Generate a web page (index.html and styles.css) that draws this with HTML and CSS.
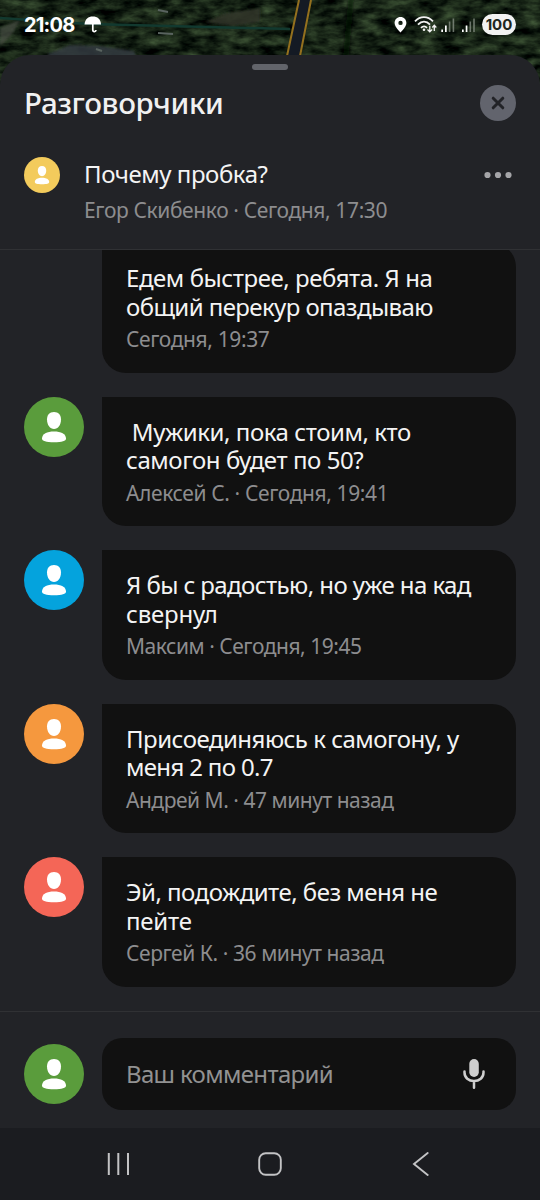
FILE: index.html
```html
<!DOCTYPE html>
<html lang="ru">
<head>
<meta charset="utf-8">
<title>Разговорчики</title>
<link rel="stylesheet" href="styles.css">
</head>
<body>
<svg class="defs" width="0" height="0">
  <symbol id="user" viewBox="0 0 60 60">
    <path d="M30 15c4.600 0 7 3 7 7.500C37 28 34 32 30 32s-7-4-7-9.500C23 18 25.400 15 30 15z"/>
    <path d="M30 34.600c7 0 12 2.600 12 7 0 2.600-4 3.700-12 3.700s-12-1.100-12-3.700c0-4.400 5-7 12-7z"/>
  </symbol>
</svg>
<div class="screen">
  <svg class="map" viewBox="0 0 540 100">
    <defs>
      <filter id="forest" x="0" y="0" width="100%" height="100%" color-interpolation-filters="sRGB">
        <feTurbulence type="fractalNoise" baseFrequency="0.05 0.11" numOctaves="4" seed="8"/>
        <feColorMatrix values="0.40 0 0 0 -0.11  0.50 0 0 0 -0.11  0.33 0 0 0 -0.08  0 0 0 0 1"/>
      </filter>
      <filter id="soft"><feGaussianBlur stdDeviation="1"/></filter>
    </defs>
    <rect width="540" height="100" filter="url(#forest)"/>
    <g filter="url(#soft)">
      <path d="M205 22l22-9 33-5v14l-28 4z" fill="#33382a" opacity=".8"/>
      <path d="M48 54l22-9 30 1 34 5 2 6H48z" fill="#343a40" opacity=".85"/>
      <path d="M0 28l20-8-8 14-12 12z" fill="#474b44" opacity=".7"/>
      <path d="M348 0h6l-5 55h-6z" fill="#060e08" opacity=".6"/>
    </g>
    <path d="M0 18l90 6 200 5" fill="none" stroke="#12392f" stroke-width="2.500"/>
    <path d="M299 0h11l-10 56h-12z" fill="#141a24"/>
    <path d="M299 0l-12 56M311 0l-11 56" fill="none" stroke="#94701e" stroke-width="2"/>
    <path d="M158 10l10 2M158 33l15 1M96 49l6 2" stroke="#59635f" stroke-width="2"/>
  </svg>
  <div class="status">
    <span class="clock">21:08</span>
    <svg class="umbrella" width="18" height="18" viewBox="0 0 18 18"><path d="M0.500 8.500C1 3 4.200 0.500 8.800 0.500S16.800 3 17 8.500z" fill="#fff"/><path d="M8.800 7v6.700c0 2.600 3 2.600 3.200 .3" fill="none" stroke="#fff" stroke-width="1.700"/></svg>
    <span class="grow"></span>
    <svg width="81" height="18" viewBox="0 0 81 18">
      <path d="M6.500 1C3 1 .600 3.600.600 7c0 4 5.900 9.500 5.900 9.500S12.400 11 12.400 7C12.400 3.600 10 1 6.500 1zm0 3.700a2.200 2.200 0 1 1 0 4.400 2.200 2.200 0 0 1 0-4.400z" fill="#fff" fill-rule="evenodd"/>
      <g fill="none" stroke="#f2f2f2" stroke-width="1.800">
        <path d="M21 5.300c5.200-5.500 12.600-5.500 18 0M24 8.700c3.600-4 8.400-4 12 0M27 11.800c2-2 4.200-2 6 0"/>
        <path d="M35.800 9.800v6M33.500 13.500l2.300 2.400 2.300-2.400M40.300 15V9.500M38.300 11.500l2-2.200 2 2.200" stroke-width="1.300"/>
      </g>
      <circle cx="30" cy="13.800" r="1.300" fill="#f2f2f2"/>
      <g fill="#fff"><path d="M47.300 13.500h1.700V16h-1.700zM51 9.500h1.700V16H51zM68 13.500h1.700V16H68zM71.700 9.500h1.700V16h-1.700z"/></g>
      <g fill="#8b948a" opacity=".75"><path d="M54.800 5.500h1.600V16h-1.600zM58.600 2.500h1.600V16h-1.600zM75.500 5.500h1.600V16h-1.600zM79.200 2.500h1.600V16h-1.600z"/></g>
    </svg>
    <span class="battery">100</span>
  </div>
  <main class="sheet">
    <div class="handle"></div>
    <header class="head">
      <h1 class="title">Разговорчики</h1>
      <svg class="close" width="36" height="36" viewBox="0 0 36 36"><circle cx="18" cy="18" r="18" fill="#62646d"/><path d="M13.200 13.200l9.600 9.600M22.800 13.200l-9.600 9.600" stroke="#222327" stroke-width="3" stroke-linecap="round"/></svg>
    </header>
    <section class="topic">
      <svg class="avatar small yellow"><use href="#user"/></svg>
      <div class="topic-body">
        <div class="question">Почему пробка?</div>
        <div class="meta author">Егор Скибенко · Сегодня, 17:30</div>
      </div>
      <svg class="dots" width="28" height="8" viewBox="0 0 28 8" fill="#a5a5a8"><circle cx="3.500" cy="4" r="3.100"/><circle cx="14" cy="4" r="3.100"/><circle cx="24.500" cy="4" r="3.100"/></svg>
    </section>
    <section class="list">
      <article class="comment first">
        <div class="avatar"></div>
        <div class="bubble"><p><span class="t4">Едем быстрее, ребята. Я на</span><br><span class="t6">общий перекур опаздываю</span></p><div class="meta">Сегодня, 19:37</div></div>
      </article>
      <article class="comment">
        <svg class="avatar green"><use href="#user"/></svg>
        <div class="bubble"><p><span class="t4">&nbsp;Мужики, пока стоим, кто</span><br><span class="t4">самогон будет по 50?</span></p><div class="meta">Алексей С. · Сегодня, 19:41</div></div>
      </article>
      <article class="comment">
        <svg class="avatar blue"><use href="#user"/></svg>
        <div class="bubble"><p><span class="t6">Я бы с радостью, но уже на кад</span><br><span class="t2">свернул</span></p><div class="meta t5">Максим · Сегодня, 19:45</div></div>
      </article>
      <article class="comment">
        <svg class="avatar orange"><use href="#user"/></svg>
        <div class="bubble"><p><span class="t5">Присоединяюсь к самогону, у</span><br><span class="t7">меня 2 по 0.7</span></p><div class="meta t5">Андрей М. · 47 минут назад</div></div>
      </article>
      <article class="comment">
        <svg class="avatar red"><use href="#user"/></svg>
        <div class="bubble"><p><span class="t5">Эй, подождите, без меня не</span><br><span class="t2">пейте</span></p><div class="meta t4">Сергей К. · 36 минут назад</div></div>
      </article>
    </section>
    <footer class="compose">
      <svg class="avatar green"><use href="#user"/></svg>
      <div class="input">
        <span class="placeholder t7">Ваш комментарий</span>
        <svg width="24" height="32" viewBox="0 0 24 32"><rect x="7.300" y="1" width="9.500" height="18" rx="4.750" fill="#cfcfcf"/><path d="M2.500 13.500v1c0 5.300 4.200 8.600 9.500 8.600s9.500-3.300 9.500-8.600v-1M12 23v6.800" fill="none" stroke="#cfcfcf" stroke-width="2.500" stroke-linecap="round"/></svg>
      </div>
    </footer>
  </main>
  <nav class="nav">
    <svg width="24" height="24" viewBox="0 0 24 24"><path d="M2.800 1v22M12.300 1v22M22 1v22" stroke="#c3c3c5" stroke-width="2"/></svg>
    <svg width="24" height="24" viewBox="0 0 24 24"><rect x="1.200" y="1.200" width="21.600" height="21.600" rx="6.500" fill="none" stroke="#c3c3c5" stroke-width="1.900"/></svg>
    <svg width="24" height="24" viewBox="0 0 24 24"><path d="M18.700 1L5 12l13.700 11" fill="none" stroke="#c3c3c5" stroke-width="1.900" stroke-linecap="round"/></svg>
  </nav>
</div>
</body>
</html>
```
FILE: styles.css
```css
* { box-sizing: border-box; }
body { margin: 0; background: #1b1c20; font-family: "Noto Sans", sans-serif; }
.defs, .map { position: absolute; top: 0; left: 0; }
.map { width: 540px; height: 100px; }
.screen { position: relative; width: 540px; height: 1200px; display: flex; flex-direction: column; overflow: hidden; }
.status { position: relative; height: 55px; flex: none; display: flex; align-items: flex-start; padding: 14px 24px 0; color: #fff; }
.status svg { margin-top: 2px; }
.clock { font: bold 20px/22px Inter, sans-serif; letter-spacing: -0.8px; width: 60px; }
.grow { flex: 1; }
.battery { width: 34px; height: 21px; margin-left: 7px; border-radius: 11px; background: #f2f2f2; color: #202620; font: bold 15px/21px Inter, sans-serif; text-align: center; }
.sheet { position: relative; height: 1073px; flex: none; background: #222327; border-radius: 30px 30px 0 0; display: flex; flex-direction: column; }
.handle { width: 36px; height: 6px; border-radius: 3px; background: #62646a; margin: 9px auto 0; flex: none; }
.head { height: 36px; margin: 15px 24px 0; display: flex; justify-content: space-between; flex: none; }
.title { margin: -2px 0 0; font-size: 29.5px; line-height: 40px; font-weight: 500; color: #f1f1f1; letter-spacing: -0.35px; }
.topic { height: 129px; padding: 36px 24px 0; display: flex; border-bottom: 1.5px solid #303134; flex: none; }
.topic-body { flex: 1; margin-left: 24px; }
.question { font-size: 24px; line-height: 34px; color: #f4f4f4; letter-spacing: -0.43px; }
.meta { font-size: 21px; line-height: 28px; color: #8d8d8f; white-space: nowrap; letter-spacing: -0.38px; }
.author { margin-top: 5px; }
.dots { margin: 14px 4px 0 0; }
.avatar { width: 60px; height: 60px; border-radius: 50%; fill: #fff; flex: none; }
.small { width: 36px; height: 36px; }
.yellow { background: #f3cb5c; }
.green { background: #5a9c3c; }
.blue { background: #04a3dd; }
.orange { background: #f5983e; }
.red { background: #f46657; }
.list { height: 761px; overflow: hidden; flex: none; display: flex; flex-direction: column; gap: 24px; }
.comment { display: flex; gap: 18px; height: 129.5px; padding: 0 24px; flex: none; }
.first { margin-top: -6.6px; }
.bubble { flex: 1; background: #111; border-radius: 0 24px 24px 24px; padding: 20.9px 0 0 24px; }
.bubble p { margin: 0 0 4px; font-size: 24px; line-height: 28.5px; color: #f4f4f4; white-space: nowrap; }
/* tracking steps */
.t2 { letter-spacing: -0.2px; }
.t4 { letter-spacing: -0.43px; }
.t5 { letter-spacing: -0.51px; }
.t6 { letter-spacing: -0.58px; }
.t7 { letter-spacing: -0.66px; }
.meta.t5 { letter-spacing: -0.47px; }
.compose { flex: 1; border-top: 1.5px solid #303134; display: flex; gap: 18px; align-items: center; padding: 7px 24px 0; }
.input { flex: 1; height: 72px; border-radius: 20px; background: #111; display: flex; align-items: center; justify-content: space-between; padding: 0 30px 0 24px; }
.placeholder { font-size: 24px; color: #929292; }
.nav { height: 72px; flex: none; background: #1b1c20; display: flex; justify-content: space-between; align-items: center; padding: 0 107px 0 106px; }
```
